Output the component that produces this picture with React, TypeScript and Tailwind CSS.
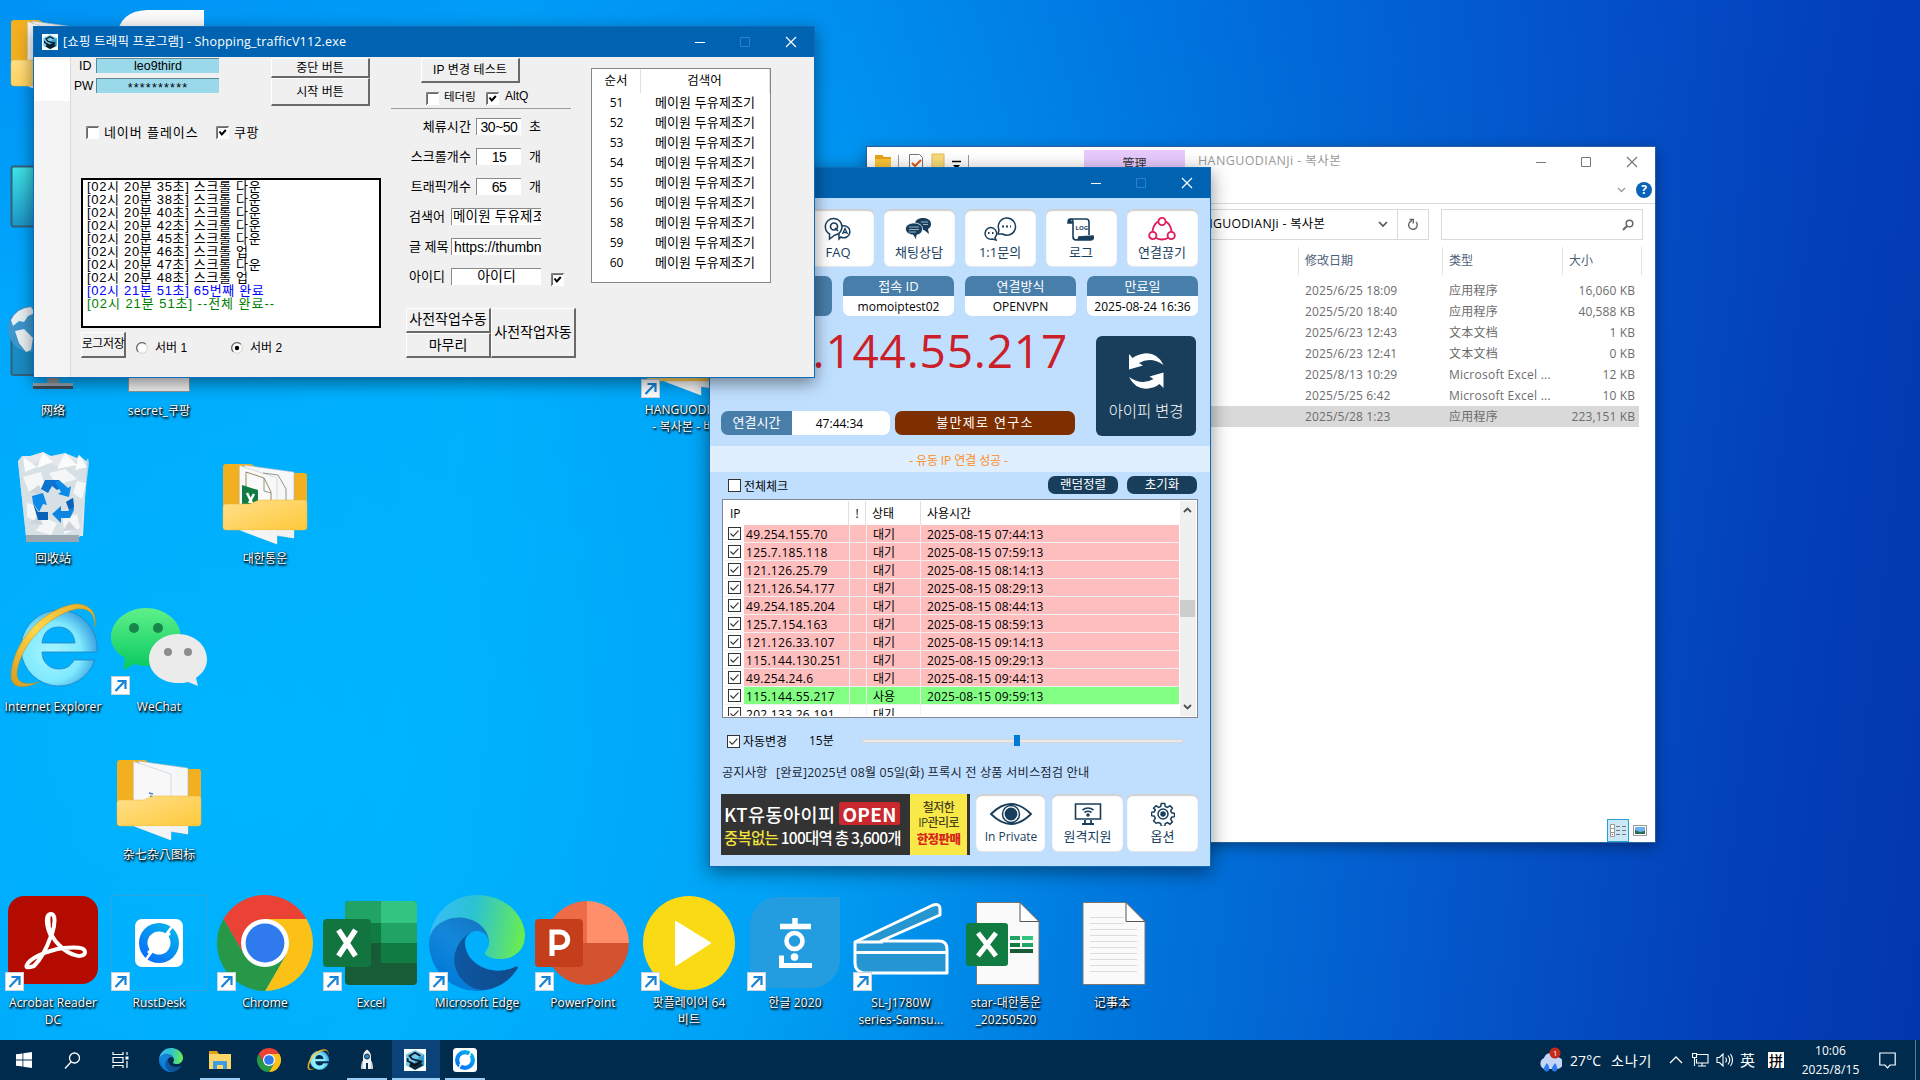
import React from "react";

/* ---------- shared glyphs ---------- */

function Controls({ tone }: { tone: "light" | "gray" }) {
  const stroke = tone === "light" ? "#ffffff" : "#777777";
  const dim = tone === "light" ? "#2f80c9" : "#777777";
  return (
    <div className="flex h-full items-center">
      <svg width="46" height="30" viewBox="0 0 46 30" fill="none">
        <path d="M19 15.5h10" stroke={stroke} />
      </svg>
      <svg width="46" height="30" viewBox="0 0 46 30" fill="none">
        <path d="M18.5 10.5h9v9h-9z" stroke={dim} />
      </svg>
      <svg width="46" height="30" viewBox="0 0 46 30" fill="none">
        <path d="M18 10l10 10M28 10l-10 10" stroke={stroke} strokeWidth="1.2" />
      </svg>
    </div>
  );
}

function Shortcut() {
  return (
    <svg className="absolute bottom-0 left-0" width="19" height="19" viewBox="0 0 19 19">
      <rect x="0.5" y="0.5" width="18" height="18" fill="#fff" stroke="#c9d3de" />
      <path d="M4.5 15L13 6M6.5 5h8v8" fill="none" stroke="#1583d8" strokeWidth="2.2" />
    </svg>
  );
}

function Chrome({ size }: { size: number }) {
  return (
    <svg width={size} height={size} viewBox="0 0 96 96">
      <path d="M6.43 24A48 48 0 0 1 89.57 24H48L27.2 60z" fill="#ea4335" />
      <path d="M89.57 24A48 48 0 0 1 48 96L68.8 60 48 24z" fill="#fbc116" />
      <path d="M48 96A48 48 0 0 1 6.43 24L27.2 60H68.8z" fill="#279847" />
      <circle cx="48" cy="48" r="24" fill="#fff" />
      <circle cx="48" cy="48" r="19.4" fill="#2f7bed" />
    </svg>
  );
}

function Edge({ size, id }: { size: number; id: string }) {
  return (
    <svg width={size} height={size} viewBox="0 0 256 256">
      <defs>
        <linearGradient id={id + "a"} x1="60" y1="180" x2="240" y2="180" gradientUnits="userSpaceOnUse">
          <stop offset="0" stopColor="#0c59a4" />
          <stop offset="1" stopColor="#114a8b" />
        </linearGradient>
        <linearGradient id={id + "b"} x1="150" y1="90" x2="40" y2="240" gradientUnits="userSpaceOnUse">
          <stop offset="0" stopColor="#1478c4" />
          <stop offset="0.4" stopColor="#1387da" />
          <stop offset="1" stopColor="#0078d7" />
        </linearGradient>
        <linearGradient id={id + "c"} x1="10" y1="70" x2="250" y2="110" gradientUnits="userSpaceOnUse">
          <stop offset="0" stopColor="#38bdf8" />
          <stop offset="0.45" stopColor="#2bc3d2" />
          <stop offset="0.75" stopColor="#4bd792" />
          <stop offset="1" stopColor="#66eb55" />
        </linearGradient>
      </defs>
      <g transform="translate(-4.63 -4.92)">
        <path fill={"url(#" + id + "a)"} d="M235.68 195.46a93.73 93.73 0 0 1-10.54 4.71 101.87 101.87 0 0 1-35.9 6.46c-47.32 0-88.54-32.55-88.54-74.32A31.48 31.48 0 0 1 117.13 105c-42.8 1.8-53.8 46.4-53.8 72.53 0 73.88 68.09 81.37 82.76 81.37 7.91 0 19.84-2.3 27-4.56l1.31-.44a128.34 128.34 0 0 0 66.6-52.8 4 4 0 0 0-5.32-5.64z" />
        <path fill={"url(#" + id + "b)"} d="M110.34 246.34A79.2 79.2 0 0 1 87.6 225a80.72 80.72 0 0 1 29.53-120c3.12-1.47 8.45-4.13 15.54-4a32.35 32.35 0 0 1 25.69 13 31.88 31.88 0 0 1 6.36 18.66c0-.21 24.46-79.6-80-79.6-43.9 0-80 41.66-80 78.21a130.15 130.15 0 0 0 12.11 56 128 128 0 0 0 156.38 67.11 75.55 75.55 0 0 1-62.78-8z" />
        <path fill={"url(#" + id + "c)"} d="M156.94 153.78c-.81 1.05-3.3 2.5-3.3 5.66 0 2.61 1.7 5.12 4.72 7.23 14.38 10 41.49 8.68 41.56 8.68a59.56 59.56 0 0 0 30.27-8.35 61.38 61.38 0 0 0 30.43-52.88c.26-22.41-8-37.31-11.34-43.91-21.19-41.45-66.93-65.29-116.67-65.29a128 128 0 0 0-128 126.2c.48-36.54 36.8-66.05 80-66.05 3.5 0 23.46.34 42 10.07 16.34 8.58 24.9 18.94 30.85 29.21 6.18 10.67 7.28 24.15 7.28 29.52s-2.74 13.33-7.8 19.91z" />
      </g>
    </svg>
  );
}

function InternetExplorer({ size, id }: { size: number; id: string }) {
  return (
    <svg width={size} height={size} viewBox="0 0 96 96">
      <defs>
        <radialGradient id={id + "e"} cx="0.4" cy="0.55" r="0.65">
          <stop offset="0" stopColor="#a6f6ff" />
          <stop offset="0.6" stopColor="#7fe9fd" />
          <stop offset="1" stopColor="#2d94dc" />
        </radialGradient>
        <linearGradient id={id + "o"} x1="0" y1="1" x2="1" y2="0">
          <stop offset="0" stopColor="#d99a1d" />
          <stop offset="0.5" stopColor="#ffd84a" />
          <stop offset="1" stopColor="#e6a925" />
        </linearGradient>
      </defs>
      <path fillRule="evenodd" fill={"url(#" + id + "e)"} stroke="#2582c6" strokeWidth="0.8" d="M54 11a38 38 0 0 1 38 42H37c0 10 7 17 17 17 7 0 12-3 15-9h21a38 38 0 1 1-36-50zM37 44h33c-1-10-7-16-16.500-16S38 34 37 44z" />
      <path fill={"url(#" + id + "o)"} stroke="#c98a12" strokeWidth="0.5" d="M90 28C92 12 84 5 70 5 38 10 8 42 6 76c0 14 12 14 28 7-14 4-23 1-22-10C16 46 42 17 71 10c14-2 19 6 19 18z" />
    </svg>
  );
}

function RustDesk({ size, id }: { size: number; id: string }) {
  return (
    <svg width={size} height={size} viewBox="0 0 48 48">
      <defs>
        <linearGradient id={id} x1="0" y1="1" x2="0.8" y2="0">
          <stop offset="0" stopColor="#0a62fb" />
          <stop offset="1" stopColor="#05b6ea" />
        </linearGradient>
      </defs>
      <rect width="48" height="48" rx="7" fill="#fff" />
      <circle cx="24" cy="24" r="20" fill={"url(#" + id + ")"} />
      <circle cx="24" cy="24" r="11.500" fill="#fff" />
      <path d="M30 17l9-12M18 31L9 43" stroke="#fff" strokeWidth="2.600" />
      <path d="M31 20l5-5-3-3-5 5zM17 28l-5 5 3 3 5-5z" fill="#fff" />
    </svg>
  );
}

function HexLogo({ size }: { size: number }) {
  return (
    <svg width={size} height={size} viewBox="0 0 24 24">
      <rect width="24" height="24" fill="#fff" />
      <path d="M12 1l10 5v12l-10 5L2 18V6z" fill="#74c9ec" />
      <path d="M12 12l10-6v12l-10 5z" fill="#2d9fd0" />
      <path d="M18 7.500L12 4 6 7.500 9 11l9 2.500v2L12 19l-5.500-3M4 10v3l8 4 8-4M6 18l6 3.500L20 17" fill="none" stroke="#0b1820" strokeWidth="1.900" />
    </svg>
  );
}

/* ---------- desktop ---------- */

function Folder({ excel, id }: { excel?: boolean; id: string }) {
  return (
    <svg width="96" height="96" viewBox="0 0 96 96">
      <defs>
        <linearGradient id={id} x1="0" y1="0" x2="1" y2="1">
          <stop offset="0" stopColor="#ffe08c" />
          <stop offset="1" stopColor="#fec83a" />
        </linearGradient>
      </defs>
      <path d="M6 16a3 3 0 0 1 3-3h24c4 0 7 6 10 9h44a3 3 0 0 1 3 3v50H6z" fill="#f2b021" />
      <path d="M27 14l50 7v66l-22-3z" fill="#f6f7f8" stroke="#9fb6c4" strokeWidth="0.6" />
      <path d="M22.500 14.500L60 27v66L22.500 78z" fill="#f8f8f8" stroke="#c2c8cc" strokeWidth="0.6" />
      {excel ? (
        <g>
          <path d="M29 21l18 6 7 14v45l-25-9z" fill="#fafafa" stroke="#8e7c50" strokeWidth="0.9" />
          <path d="M47 27v13l7 2M46 22l15 2 8 14v44H60" fill="none" stroke="#8a8a80" strokeWidth="0.9" />
          <path d="M25 34l16 5v20H25z" fill="#107c41" />
          <path d="M30 42l6 12M37 43l-5 9" stroke="#fff" strokeWidth="2.500" />
        </g>
      ) : (
        <path d="M38 46l4 1M39 49l3 1" stroke="#4a7fc0" strokeWidth="1.500" />
      )}
      <path d="M6 56a3 3 0 0 1 3-3h24l9-4h45a3 3 0 0 1 3 3v24a3 3 0 0 1-3 3H9a3 3 0 0 1-3-3z" fill={"url(#" + id + ")"} stroke="#edb63a" strokeWidth="0.5" />
      <path d="M22.500 79.300l37.500 14V79.300z" fill="#f4f4f4" />
      <path d="M60 79.300h17v8l-17-3z" fill="#eff1f3" />
    </svg>
  );
}

function RecycleBin() {
  return (
    <svg width="96" height="96" viewBox="0 0 96 96">
      <path d="M17 5l8 0 13-4 8 4 14-3 12 5 2-3 8 7-4 74H21L13 10z" fill="#e4e8eb" />
      <path d="M13 11l5-6 6 10 16-8 12 8 16-8 10 8 5-8 1 5-9 74H21z" fill="#d3dde4" opacity="0.8" />
      <path d="M18 6l14 10-12 5zM38 1l10 10-16 6zM60 2l12 12-20 4zM74 4l8 12-12 3z" fill="#fafbfb" />
      <path d="M18 26l18-5 4 14-16 6zM44 22l16-4 12 10-20 6zM72 30l9 2-4 16-9-6zM22 52l12 4-4 14-8-4zM38 66l14 6-6 12-14-4zM58 68l14-5 3 14-16 6zM30 80l8-8 10 9z" fill="#f5f6f7" />
      <path d="M24 41l10-7 4 10zM54 35l12 2-5 6zM24 72l10-6 4 8zM58 80l6-10 8 9z" fill="#cdd5da" />
      <path d="M21 84h53v7H21z" fill="#9ba8b1" />
      <path d="M40 29h14l4 7-6 3-5-4-4 7-7-4z" fill="#0a73cf" />
      <path d="M54 29l9 8 3-2-2 11-11-3 3-2-6-10z" fill="#0c8be8" />
      <path d="M27 45l11-3 4 12-4-1-4 8-6-9z" fill="#0c8be8" />
      <path d="M28 52l5 9h10v8H33z" fill="#0a62b8" />
      <path d="M61 51l7-4 1 12-4 8-9 0v5l-9-9 9-8v5h7l4-4z" fill="#0d86e2" />
      <path d="M61 51l7-4 1 9-5 3z" fill="#0a62b8" />
    </svg>
  );
}

function WeChat() {
  return (
    <svg width="96" height="96" viewBox="0 0 96 96">
      <defs>
        <linearGradient id="wx" x1="0" y1="0" x2="0" y2="1">
          <stop offset="0" stopColor="#5ff08a" />
          <stop offset="1" stopColor="#07c95f" />
        </linearGradient>
      </defs>
      <path d="M35 9c19 0 35 13 35 29S54 67 35 67c-4 0-8-1-11-2l-12 6 2-12C5 54 0 47 0 38 0 22 16 9 35 9z" fill="url(#wx)" />
      <circle cx="23" cy="29" r="5" fill="#17864a" />
      <circle cx="47" cy="29" r="5" fill="#17864a" />
      <path d="M67 35c16 0 29 11 29 25 0 8-4 14-11 19l2 8-10-4c-3 1-6 1-10 1-16 0-29-10-29-24s13-25 29-25z" fill="#ebebeb" />
      <circle cx="57" cy="53" r="4" fill="#8d8d8d" />
      <circle cx="77" cy="53" r="4" fill="#8d8d8d" />
    </svg>
  );
}

function Acrobat() {
  return (
    <svg width="96" height="96" viewBox="0 0 96 96">
      <rect x="3" y="1" width="90" height="88" rx="16" fill="#b30b00" />
      <path d="M46 19c-6 0-5 12 0 22-5 14-11 24-17 30-9 3-8 0-7-1 2-6 18-14 36-17 12-1 22-1 22 4 0 6-13 6-26-7-5-5-9-12-10-18-1-8-1-13 2-13 5 0 4 11 1 20" fill="none" stroke="#fff" strokeWidth="4" strokeLinejoin="round" />
    </svg>
  );
}

function ExcelApp() {
  return (
    <svg width="96" height="96" viewBox="0 0 96 96">
      <rect x="22" y="6" width="72" height="84" rx="4" fill="#185c37" />
      <path d="M22 10a4 4 0 0 1 4-4h32v22H22z" fill="#21a366" />
      <path d="M58 6h32a4 4 0 0 1 4 4v18H58z" fill="#33c481" />
      <path d="M22 28h36v20H22z" fill="#107c41" />
      <path d="M58 28h36v20H58z" fill="#21a366" />
      <path d="M58 48h36v20H58z" fill="#107c41" />
      <rect x="0" y="24" width="48" height="48" rx="4" fill="#12753f" />
      <path d="M15.500 35l17 26M32.500 35l-17 26" stroke="#fff" strokeWidth="5.500" />
    </svg>
  );
}

function PowerPoint() {
  return (
    <svg width="96" height="96" viewBox="0 0 96 96">
      <path d="M52 6a42 42 0 0 0-42 42h42z" fill="#ed6c47" />
      <path d="M52 6a42 42 0 0 1 42 42H52z" fill="#ff8f6b" />
      <path d="M10 48a42 42 0 0 0 84 0z" fill="#d35230" />
      <rect x="0" y="24" width="48" height="48" rx="4" fill="#c43e1c" />
      <path d="M17 61V37h8a7 7 0 0 1 0 15.500h-8" fill="none" stroke="#fff" strokeWidth="5" />
    </svg>
  );
}

function PotPlayer() {
  return (
    <svg width="96" height="96" viewBox="0 0 96 96">
      <ellipse cx="48" cy="48" rx="46" ry="47" fill="#fad915" />
      <path d="M35 27l34 21-34 22z" fill="#fff" stroke="#fff" strokeWidth="2" strokeLinejoin="round" />
    </svg>
  );
}

function Hangul() {
  return (
    <svg width="96" height="96" viewBox="0 0 96 96">
      <path d="M3 30A28 28 0 0 1 31 2h62v62a29 29 0 0 1-29 29H3z" fill="#249de0" />
      <path d="M48 23v8M33 31.500h31" stroke="#fff" strokeWidth="5.500" />
      <circle cx="47.500" cy="46" r="8" fill="none" stroke="#fff" strokeWidth="4.600" />
      <circle cx="47.500" cy="62" r="3.800" fill="#fff" />
      <path d="M34.500 60.500v10H65" fill="none" stroke="#fff" strokeWidth="5" />
    </svg>
  );
}

function Scanner() {
  return (
    <svg width="96" height="96" viewBox="0 0 96 96" fill="#2596d1" stroke="#fff" strokeWidth="3" strokeLinejoin="round">
      <path d="M2 47L80 10q7-2 7 4v6L28 46h58q8 0 8 8v24H10q-8-2-8-10z" />
      <path d="M2 57.500h92M2 47h28" fill="none" />
    </svg>
  );
}

function ExcelDoc() {
  return (
    <svg width="96" height="96" viewBox="0 0 96 96">
      <path d="M18.500 7.500H62l19 19v63H18.500z" fill="#fafafa" stroke="#777" />
      <path d="M62 7.500v19h19z" fill="#fff" stroke="#555" />
      <rect x="8" y="28" width="42" height="43" rx="3" fill="#107c41" />
      <path d="M20 38l18 23M38 38L20 61" stroke="#fff" strokeWidth="5" />
      <path d="M52 41h10v4H52z" fill="#21a366" />
      <path d="M64 41h11v4H64z" fill="#33c481" />
      <path d="M52 48h10v4H52z" fill="#107c41" />
      <path d="M64 48h11v4H64z" fill="#21a366" />
      <path d="M52 54h23v4H52z" fill="#185c37" />
    </svg>
  );
}

function NoteDoc() {
  return (
    <svg width="96" height="96" viewBox="0 0 96 96">
      <path d="M19 7.500H62l19 19v63H19z" fill="#fafafa" stroke="#777" />
      <path d="M62 7.500v19h19z" fill="#fff" stroke="#555" />
      <path d="M26 22.500h34M26 28.500h34M26 34.500h47M26 40.500h47M26 46.500h47M26 52.500h47M26 58.500h47M26 64.500h47M26 70.500h47M26 76.500h47" stroke="#dcdcdc" />
    </svg>
  );
}

function RustDeskTile() {
  return (
    <div className="flex size-24 items-center justify-center border border-[#2fa4dd]">
      <RustDesk size={48} id="rust1" />
    </div>
  );
}

function Computer() {
  return (
    <svg width="96" height="96" viewBox="0 0 96 96">
      <defs>
        <linearGradient id="mon" x1="0" y1="0" x2="0.5" y2="1">
          <stop offset="0" stopColor="#3fe6e6" />
          <stop offset="1" stopColor="#1583c0" />
        </linearGradient>
      </defs>
      <rect x="6.500" y="11.500" width="83" height="60" rx="2" fill="url(#mon)" stroke="#33607a" strokeWidth="2" />
    </svg>
  );
}

function Network() {
  return (
    <svg width="96" height="96" viewBox="0 0 96 96">
      <rect x="6.500" y="14" width="83" height="58" rx="2" fill="#1a8cc4" stroke="#33607a" strokeWidth="2" />
      <path d="M42 72h12v9H42z" fill="#8b9198" />
      <path d="M28 80h40v5H28z" fill="#98a2ac" />
      <path d="M28 83h40v3H28z" fill="#3f4a55" />
      <circle cx="26" cy="26" r="23" fill="#3d96cc" />
      <path d="M6 17q6-12 20-13l4 6-7 3-4 6-5-1-6 5zM10 28l9-2 9 9-2 12-5 2-7-9z" fill="#e8eff3" />
    </svg>
  );
}

function SecretDoc() {
  return (
    <svg width="96" height="96" viewBox="0 0 96 96">
      <path d="M17.500 4.500h61v84h-61z" fill="#f0f0f0" stroke="#8d9499" />
    </svg>
  );
}

function HwpDoc() {
  return (
    <svg width="96" height="96" viewBox="0 0 96 96">
      <path d="M6 30Q8 4 36 3h57v80H6z" fill="#fbfbfb" />
    </svg>
  );
}

type Item = {
  pos: string;
  icon: React.ReactNode;
  lines: string[];
  shortcut?: boolean;
};

const items: Item[] = [
  { pos: "left-0 top-[7px]", icon: <Folder id="f1" />, lines: [] },
  { pos: "left-[106px] top-[7px]", icon: <HwpDoc />, lines: [] },
  { pos: "left-0 top-[155px]", icon: <Computer />, lines: [] },
  { pos: "left-0 top-[303px]", icon: <Network />, lines: ["网络"] },
  { pos: "left-[106px] top-[303px]", icon: <SecretDoc />, lines: ["secret_쿠팡"] },
  { pos: "left-[636px] top-[302px]", icon: <Folder id="f2" />, lines: ["HANGUODIANJi", "- 복사본 - 바로"], shortcut: true },
  { pos: "left-0 top-[451px]", icon: <RecycleBin />, lines: ["回收站"] },
  { pos: "left-[212px] top-[451px]", icon: <Folder id="f3" excel />, lines: ["대한통운"] },
  { pos: "left-0 top-[599px]", icon: <InternetExplorer size={96} id="ie1" />, lines: ["Internet Explorer"] },
  { pos: "left-[106px] top-[599px]", icon: <WeChat />, lines: ["WeChat"], shortcut: true },
  { pos: "left-[106px] top-[747px]", icon: <Folder id="f4" />, lines: ["杂七杂八图标"] },
  { pos: "left-0 top-[895px]", icon: <Acrobat />, lines: ["Acrobat Reader", "DC"], shortcut: true },
  { pos: "left-[106px] top-[895px]", icon: <RustDeskTile />, lines: ["RustDesk"], shortcut: true },
  { pos: "left-[212px] top-[895px]", icon: <Chrome size={96} />, lines: ["Chrome"], shortcut: true },
  { pos: "left-[318px] top-[895px]", icon: <ExcelApp />, lines: ["Excel"], shortcut: true },
  { pos: "left-[424px] top-[895px]", icon: <Edge size={96} id="ed1" />, lines: ["Microsoft Edge"], shortcut: true },
  { pos: "left-[530px] top-[895px]", icon: <PowerPoint />, lines: ["PowerPoint"], shortcut: true },
  { pos: "left-[636px] top-[895px]", icon: <PotPlayer />, lines: ["팟플레이어 64", "비트"], shortcut: true },
  { pos: "left-[742px] top-[895px]", icon: <Hangul />, lines: ["한글 2020"], shortcut: true },
  { pos: "left-[848px] top-[895px]", icon: <Scanner />, lines: ["SL-J1780W", "series-Samsu..."], shortcut: true },
  { pos: "left-[953px] top-[895px]", icon: <ExcelDoc />, lines: ["star-대한통운", "_20250520"] },
  { pos: "left-[1059px] top-[895px]", icon: <NoteDoc />, lines: ["记事本"] },
];

function DesktopItem({ item }: { item: Item }) {
  return (
    <div className={"absolute flex w-[106px] flex-col items-center " + item.pos}>
      <div className="relative size-24">
        {item.icon}
        {item.shortcut && <Shortcut />}
      </div>
      <div className="mt-[3px] text-center text-[12px] leading-[17px] tracking-[0.1px] whitespace-nowrap text-white [text-shadow:1px_1px_2px_#000,1px_2px_2px_#000c,0_0_2px_#0008]">
        {item.lines.map((l) => (
          <div key={l}>{l}</div>
        ))}
      </div>
    </div>
  );
}

/* ---------- traffic program window ---------- */

const BTN =
  "flex items-center justify-center whitespace-nowrap border-t border-l border-t-white border-l-white border-r-2 border-b-2 border-r-[#696969] border-b-[#696969] bg-[#f0f0f0]";
const FIELD = "flex items-center overflow-hidden whitespace-nowrap border-t border-l border-[#8a8a8a] bg-white";

function OldCheck({ on }: { on?: boolean }) {
  return (
    <svg className="shrink-0" width="13" height="13" viewBox="0 0 13 13">
      <rect width="13" height="13" fill="#fff" />
      <path d="M0.500 13V0.500H13" fill="none" stroke="#808080" />
      <path d="M1.500 12V1.500H12" fill="none" stroke="#696969" />
      {on && <path d="M3.500 5.500l2.300 3 4-4.500" fill="none" stroke="#000" strokeWidth="2" />}
    </svg>
  );
}

function Radio({ on }: { on?: boolean }) {
  return (
    <svg width="12" height="12" viewBox="0 0 12 12">
      <circle cx="6" cy="6" r="5.300" fill="#fff" stroke="#d0d0d0" />
      <path d="M2.200 9.800A5.300 5.300 0 0 1 9.800 2.200" fill="none" stroke="#6e6e6e" strokeWidth="1.300" />
      {on && <circle cx="6" cy="6" r="2.200" fill="#000" />}
    </svg>
  );
}

const logs = [
  "[02시 20분 35초] 스크롤 다운",
  "[02시 20분 38초] 스크롤 다운",
  "[02시 20분 40초] 스크롤 다운",
  "[02시 20분 42초] 스크롤 다운",
  "[02시 20분 45초] 스크롤 다운",
  "[02시 20분 46초] 스크롤 업",
  "[02시 20분 47초] 스크롤 다운",
  "[02시 20분 48초] 스크롤 업",
];

const numberRows = [
  ["체류시간", "30~50", "초"],
  ["스크롤개수", "15", "개"],
  ["트래픽개수", "65", "개"],
];

function TrafficWindow() {
  return (
    <div className="absolute left-[33px] top-[26px] flex h-[352px] w-[782px] flex-col border border-[#0f6cb8] bg-[#f0f0f0] shadow-[0_5px_16px_rgba(0,0,0,0.45)] [font-family:'Liberation_Sans','Noto_Sans_CJK_KR',sans-serif]">
      <div className="flex h-[30px] shrink-0 items-center bg-[#0063b1] pl-2 text-white">
        <HexLogo size={16} />
        <div className="ml-[5px] flex-1 text-[12.5px] tracking-[0.18px] [font-family:'Open_Sans','Noto_Sans_CJK_KR',sans-serif]">
          [쇼핑 트래픽 프로그램] - Shopping_trafficV112.exe
        </div>
        <Controls tone="light" />
      </div>
      <div className="flex min-h-0 flex-1 text-[12.500px] text-black">
        <div className="w-[37px] border-r border-[#d9d9d9] bg-[#f4f4f4] pt-[3px]">
          <div className="h-[41px] bg-white" />
        </div>
        {/* account, options and log */}
        <div className="flex w-[320px] flex-col pt-px">
          <div className="flex h-12">
            <div className="flex flex-col gap-[5px]">
              <div className="flex h-[15px] items-center">
                <span className="w-[25px] pt-px pl-2">ID</span>
                <div className="flex h-[15px] w-[123px] items-center justify-center border-t border-l border-[#5e8a98] bg-[#99d9ea]">leo9third</div>
              </div>
              <div className="flex h-[15px] items-center">
                <span className="w-[25px] pt-px pl-[3px] text-[12px]">PW</span>
                <div className="flex h-[15px] w-[123px] items-center justify-center border-t border-l border-[#5e8a98] bg-[#99d9ea] pt-1 tracking-[1.2px]">**********</div>
              </div>
            </div>
            <div className="ml-[52px] flex w-[99px] flex-col">
              <div className={BTN + " h-5 text-[12px]"}>중단 버튼</div>
              <div className={BTN + " h-7 text-[12px]"}>시작 버튼</div>
            </div>
          </div>
          <div className="mt-5 flex h-[13px] items-center pl-[15px]">
            <OldCheck />
            <span className="ml-[5px] w-[112px] text-[13px] tracking-[0.9px]">네이버 플레이스</span>
            <OldCheck on />
            <span className="ml-[5px] text-[13px] tracking-[0.5px]">쿠팡</span>
          </div>
          <div className="mt-[39px] ml-[10px] flex h-[150px] w-[300px] flex-col border-2 border-black bg-white pl-[4px] text-[13px] leading-[13px] tracking-[0.68px] whitespace-pre">
            {logs.map((l) => (
              <div key={l} className="h-[13px]">{l}</div>
            ))}
            <div className="h-[13px] text-[#0000ff]">[02시 21분 51초] 65번째 완료</div>
            <div className="h-[13px] tracking-[0.95px] text-[#008000]">[02시 21분 51초] --전체 완료--</div>
          </div>
          <div className="mt-1 ml-[10px] flex h-[26px] items-center">
            <div className={BTN + " h-full w-[45px] pb-px text-[12px] tracking-[-0.4px]"}>로그저장</div>
            <div className="ml-[10px] flex w-[95px] items-center gap-[7px] pt-[6px] text-[12px]"><Radio />서버 1</div>
            <div className="flex items-center gap-[7px] pt-[6px] text-[12px]"><Radio on />서버 2</div>
          </div>
        </div>
        {/* run settings */}
        <div className="flex w-[200px] flex-col pt-px">
          <div className={BTN + " ml-[30px] h-[25px] w-[99px] text-[12px] tracking-[0.1px]"}>IP 변경 테스트</div>
          <div className="mt-2 ml-[35px] flex h-[14px] items-end text-[11.500px]">
            <OldCheck />
            <span className="mb-[-1px] ml-[5px] w-[42px]">테더링</span>
            <OldCheck on />
            <span className="ml-[6px] text-[12px]">AltQ</span>
          </div>
          <div className="mt-[3px] h-px w-[180px] bg-[#9a9a9a]" />
          <div className="mt-[9px] flex flex-col gap-[13px] text-[13px]">
            {numberRows.map((r) => (
              <div key={r[0]} className="flex h-[17px] items-center">
                <span className="w-[85px] pr-[5px] text-right tracking-[0.1px] whitespace-nowrap">{r[0]}</span>
                <div className={FIELD + " h-[17px] w-[45px] justify-center text-[14px] tracking-[-0.5px]"}>{r[1]}</div>
                <span className="ml-2">{r[2]}</span>
              </div>
            ))}
            <div className="flex h-[17px] items-center">
              <span className="w-[60px] pl-[18px] whitespace-nowrap">검색어</span>
              <div className={FIELD + " h-[17px] w-[90px] pl-px text-[13.500px] tracking-[0.2px]"}>메이원 두유제조기</div>
            </div>
            <div className="flex h-[17px] items-center">
              <span className="w-[60px] pl-[18px] whitespace-nowrap">글 제목</span>
              <div className={FIELD + " h-[17px] w-[90px] pl-[2px] text-[14px] tracking-[-0.1px]"}>https://thumbnail</div>
            </div>
            <div className="flex h-[17px] items-center">
              <span className="w-[60px] pl-[18px] whitespace-nowrap">아이디</span>
              <div className={FIELD + " h-[17px] w-[90px] justify-center pb-px text-[14px]"}>아이디</div>
              <div className="mt-[5px] ml-[10px]"><OldCheck on /></div>
            </div>
          </div>
          <div className="mt-[23px] ml-[15px] flex h-[50px] text-[14px]">
            <div className="flex w-[85px] flex-col">
              <div className={BTN + " h-[25px] pb-px"}>사전작업수동</div>
              <div className={BTN + " h-[25px]"}>마무리</div>
            </div>
            <div className={BTN + " w-[85px]"}>사전작업자동</div>
          </div>
        </div>
        {/* keyword list */}
        <div className="mt-[11px] flex h-[215px] w-[180px] flex-col border border-[#828790] bg-white text-[13px]">
          <div className="flex h-6 shrink-0 items-center text-[12.500px]">
            <div className="flex h-full w-[49px] items-center justify-center border-r border-[#e0e0e0]">순서</div>
            <div className="flex h-full flex-1 items-center justify-center border-r border-[#e0e0e0] pr-px">검색어</div>
          </div>
          {[51, 52, 53, 54, 55, 56, 58, 59, 60].map((n) => (
            <div key={n} className="flex h-5 items-center">
              <span className="w-[49px] text-center text-[12px] [font-family:'Open_Sans',sans-serif]">{n}</span>
              <span className="flex-1 pr-px text-center tracking-[0.1px]">메이원 두유제조기</span>
            </div>
          ))}
        </div>
      </div>
    </div>
  );
}

/* ---------- VPN client window ---------- */

const INK = "#183e5b";

const toolIcons: { label: string; icon: React.ReactNode }[] = [
  {
    label: "FAQ",
    icon: (
      <svg width="28" height="24" viewBox="0 0 28 24" fill="none" stroke={INK} strokeWidth="1.500">
        <path d="M5.500 22v-5A8.300 8.300 0 1 1 11 18z" />
        <circle cx="10" cy="9.500" r="3.500" strokeWidth="1.700" />
        <path d="M11 11l3 3" strokeWidth="1.700" />
        <path d="M18 9a6 6 0 1 1-1 11l-2 2v-6" />
        <path d="M18.500 17l2.500-5.500 2.500 5.500M19.500 15.500h3" strokeWidth="1.300" />
      </svg>
    ),
  },
  {
    label: "채팅상담",
    icon: (
      <svg width="28" height="24" viewBox="0 0 28 24">
        <path d="M18 1c5 0 8 2.500 8 6 0 2-1 4-3 5l1 5-5-4h-4c-3-1-5-3-5-6 0-3.500 3-6 8-6z" fill={INK} />
        <path d="M9 6c5 0 8.500 2.500 8.500 6S15 17.500 12 18l-1 5-3-5C4 17.500.500 15.500.500 12S4 6 9 6z" fill={INK} stroke="#fff" strokeWidth="0.8" />
        <path d="M4 10h10M4 12.500h10M4 15h7M16 5h7M18 7.500h5" stroke="#a8c0d0" strokeWidth="0.9" />
      </svg>
    ),
  },
  {
    label: "1:1문의",
    icon: (
      <svg width="34" height="24" viewBox="0 0 34 24" fill="none" stroke={INK} strokeWidth="1.500">
        <path d="M15 17l1-4A8.600 8.600 0 1 1 19.500 17z" />
        <path d="M12 20.500l1 2.500-3.500-1A5.800 5.800 0 1 1 12 20.500z" />
        <path d="M19 9.500h2M23 9.500h2M27 9.500h1M5 16h1.500M9 16h1.500" strokeWidth="1.800" />
      </svg>
    ),
  },
  {
    label: "로그",
    icon: (
      <svg width="28" height="24" viewBox="0 0 28 24" fill="none" stroke={INK} strokeWidth="1.600">
        <path d="M6 20V5Q6 2 3 2h16q3 0 3 3v13" />
        <path d="M3 2Q1 2 1 6h5" fill={INK} />
        <path d="M6 20q0 3 3 3h15q3 0 2-4l-14 1q0 3-3 3" fill={INK} />
        <text x="8.500" y="13" fontSize="6" fontWeight="700" fill={INK} stroke="none" fontFamily="Open Sans">LOG</text>
      </svg>
    ),
  },
  {
    label: "연결끊기",
    icon: (
      <svg width="28" height="24" viewBox="0 0 28 24" fill="none" stroke="#e01f5a" strokeWidth="1.900">
        <circle cx="14" cy="4.500" r="3.600" />
        <circle cx="4.800" cy="18.500" r="3.600" />
        <circle cx="23.200" cy="18.500" r="3.600" />
        <path d="M10 4.500Q5 8 4.500 14.500M18 4.500q5 3.500 5.500 10M8 21q6 3 12 0" />
      </svg>
    ),
  },
];

const TILE =
  "flex flex-col items-center rounded-[6px] bg-white text-[13px] text-[#183e5b] shadow-[inset_0_2px_1px_rgba(120,120,120,0.35),inset_0_-1px_1px_rgba(150,150,150,0.25)]";

const ipRows = [
  ["49.254.155.70", "대기", "2025-08-15 07:44:13"],
  ["125.7.185.118", "대기", "2025-08-15 07:59:13"],
  ["121.126.25.79", "대기", "2025-08-15 08:14:13"],
  ["121.126.54.177", "대기", "2025-08-15 08:29:13"],
  ["49.254.185.204", "대기", "2025-08-15 08:44:13"],
  ["125.7.154.163", "대기", "2025-08-15 08:59:13"],
  ["121.126.33.107", "대기", "2025-08-15 09:14:13"],
  ["115.144.130.251", "대기", "2025-08-15 09:29:13"],
  ["49.254.24.6", "대기", "2025-08-15 09:44:13"],
  ["115.144.55.217", "사용", "2025-08-15 09:59:13"],
  ["202.133.26.191", "대기", ""],
];

function Check({ on }: { on?: boolean }) {
  return (
    <svg className="shrink-0" width="13" height="13" viewBox="0 0 13 13" fill="none">
      <rect x="0.500" y="0.500" width="12" height="12" fill="#fff" stroke="#333" />
      {on && <path d="M2.500 6.500l2.700 2.700 5.300-5.500" stroke="#333" strokeWidth="1.100" />}
    </svg>
  );
}

function rowColor(i: number) {
  if (i < 9) return "bg-[#ffbebe]";
  return i === 9 ? "bg-[#82ff82]" : "bg-white";
}

function InfoPill({ head, value }: { head: string; value: string }) {
  return (
    <div className="h-10 w-[111px] overflow-hidden rounded-[7px] bg-white text-center">
      <div className="h-5 bg-[#477eaa] text-[13px] leading-[20px] text-white">{head}</div>
      <div className="text-[12px] leading-[21px] whitespace-nowrap text-black">{value}</div>
    </div>
  );
}

function VpnWindow() {
  return (
    <div className="absolute left-[709px] top-[167px] flex h-[700px] w-[502px] flex-col border border-[#0f6cb8] bg-[#c0dfff] shadow-[0_5px_18px_rgba(0,0,0,0.45)] [font-family:'Open_Sans','Noto_Sans_CJK_KR',sans-serif]">
      <div className="flex h-[30px] shrink-0 items-center justify-end bg-[#0063b1]">
        <Controls tone="light" />
      </div>
      <div className="mt-[11px] ml-3 flex gap-[10px]">
        <div className={TILE + " h-[58px] w-[71px]"} />
        {toolIcons.map((t) => (
          <div key={t.label} className={TILE + " h-[58px] w-[71px] pt-[8px] pr-px"}>
            {t.icon}
            <span className="mt-[3px] leading-[17px] whitespace-nowrap">{t.label}</span>
          </div>
        ))}
      </div>
      <div className="mt-[9px] ml-[11px] flex gap-[11px]">
        <div className="h-10 w-[111px] rounded-[7px] bg-[#477eaa]" />
        <InfoPill head="접속 ID" value="momoiptest02" />
        <InfoPill head="연결방식" value="OPENVPN" />
        <InfoPill head="만료일" value="2025-08-24 16:36" />
      </div>
      <div className="mt-5 ml-[11px] flex h-[99px]">
        <div className="flex w-[354px] flex-col">
          <div className="-mt-[13px] flex h-[54px] items-center justify-end pr-[7px] text-[46px] leading-none tracking-[0.8px] whitespace-nowrap text-[#cc2029]">
            115.144.55.217
          </div>
          <div className="mt-[34px] flex h-6 text-[13px]">
            <div className="flex w-[71px] items-center justify-center rounded-l-[7px] bg-[#477eaa] text-white">연결시간</div>
            <div className="flex w-[98px] items-center justify-center rounded-r-[7px] bg-white pt-px pr-[3px] text-[12px] text-black">47:44:34</div>
            <div className="ml-[5px] flex w-[180px] items-center justify-center rounded-[7px] bg-[#7d2f00] tracking-[1.300px] text-white">불만제로 연구소</div>
          </div>
        </div>
        <div className="ml-[21px] flex h-[100px] w-[100px] flex-col items-center rounded-[6px] bg-[#183e5b] text-white">
          <svg className="mt-[17px]" width="36" height="36" viewBox="0 0 36 36" fill="#fff">
            <path d="M1 1v15.500l14-4-4-2.500Q23 3 35.500 12 29-1 16 .5 9 1.500 4.500 5z" />
            <path d="M35.500 35V19.500l-14 4 4 2.500Q14 33 1 24q6.500 13 19.500 11.500 7-1 11-4.500z" />
          </svg>
          <span className="mt-[11px] text-[15.500px] leading-[22px] font-light tracking-[-0.1px] whitespace-nowrap">아이피 변경</span>
        </div>
      </div>
      <div className="mt-[11px] flex h-[26px] shrink-0 items-center justify-center bg-[#e0effd] pt-[4px] pr-[3px] text-[12px] tracking-[-0.1px] text-[#ff8c1a]">- 유동 IP 연결 성공 -</div>
      <div className="mt-1 ml-[18px] flex h-[18px] items-center text-[12px]">
        <Check />
        <span className="ml-[3px] flex-1 pt-[4px]">전체체크</span>
        <div className="flex h-[18px] w-[70px] items-center justify-center rounded-[7px] bg-[#183e5b] text-[12.500px] text-white">랜덤정렬</div>
        <div className="mr-[13px] ml-[9px] flex h-[18px] w-[70px] items-center justify-center rounded-[7px] bg-[#183e5b] text-[12.500px] text-white">초기화</div>
      </div>
      <div className="mt-[5px] ml-3 flex h-[219px] w-[476px] shrink-0 border border-[#828790] bg-white p-px text-[12px] text-black">
        <div className="flex h-full flex-1 flex-col overflow-hidden">
          <div className="flex h-6 shrink-0 items-center">
            <div className="flex h-full w-[125px] items-center border-r border-[#e0e0e0] pt-[2px] pl-[6px]">IP</div>
            <div className="flex h-full w-[17px] items-center justify-center border-r border-[#e0e0e0] pt-[2px]">!</div>
            <div className="flex h-full w-[55px] items-center border-r border-[#e0e0e0] pt-[2px] pl-[6px]">상태</div>
            <div className="pt-[2px] pl-[6px]">사용시간</div>
          </div>
          {ipRows.map((r, i) => (
            <div key={r[0]} className="flex h-[18px] shrink-0 border-b border-[#f0f0f0]">
              <div className="w-5 pt-[2px] pl-1"><Check on /></div>
              <div className={"flex flex-1 leading-[19px] " + rowColor(i)}>
                <span className="w-[106px] border-r border-[#f0f0f0] pl-[2px] tracking-[0.28px]">{r[0]}</span>
                <span className="w-[17px] border-r border-[#f0f0f0]" />
                <span className="w-[54px] border-r border-[#f0f0f0] pl-[6px]">{r[1]}</span>
                <span className="pl-[6px] tracking-[0.18px]">{r[2]}</span>
              </div>
            </div>
          ))}
        </div>
        <div className="ml-px flex w-4 flex-col items-center justify-between bg-[#f0f0f0] py-[6px] pr-[2px]">
          <svg width="9" height="6" viewBox="0 0 9 6"><path d="M1 5l3.500-3.500L8 5" fill="none" stroke="#505050" strokeWidth="1.800" /></svg>
          <div className="h-[17px] w-[15px] bg-[#cdcdcd]" />
          <svg width="9" height="6" viewBox="0 0 9 6"><path d="M1 1l3.500 3.500L8 1" fill="none" stroke="#505050" strokeWidth="1.800" /></svg>
        </div>
      </div>
      <div className="mt-[16px] ml-[17px] flex h-[14px] items-center text-[12px]">
        <Check on />
        <span className="ml-[3px] w-[66px] pt-px">자동변경</span>
        <span className="w-[53px]">15분</span>
        <div className="flex h-1 w-[321px] items-center border border-[#d6d6d6] bg-[#e7eaea]">
          <div className="-mt-[2px] ml-[151px] h-[11px] w-[6px] bg-[#0078d7]" />
        </div>
      </div>
      <div className="mt-[15px] ml-[11px] flex h-5 items-center text-[12.300px] text-[#1a2733]">
        <span className="w-[55px] pl-px">공지사항</span>
        <span className="tracking-[0.12px] whitespace-nowrap">[완료]2025년 08월 05일(화) 프록시 전 상품 서비스점검 안내</span>
      </div>
      <div className="mt-[11px] ml-[11px] flex">
        <div className="flex h-[61px] w-[249px] bg-[#333] font-bold">
          <div className="flex w-[189px] flex-col justify-center whitespace-nowrap text-white [font-family:'Noto_Sans_CJK_KR',sans-serif]">
            <div className="flex items-center pl-[3px] text-[18.500px] leading-6 font-medium tracking-[0.45px]">
              KT유동아이피
              <span className="ml-1 rounded-[2px] bg-[#c8282e] px-[3px] text-[19px] leading-[23px] font-bold tracking-[0.3px]">OPEN</span>
            </div>
            <div className="pl-[3px] text-[15.500px] leading-[22px] font-medium tracking-[-0.75px]">
              <span className="text-[#f3e23c]">중복없는</span> 100대역 총 3,600개
            </div>
          </div>
          <div className="flex w-[57px] flex-col items-center justify-center bg-[#f8e948] text-[12px] leading-[15px] font-medium tracking-[-0.6px] whitespace-nowrap text-[#4a4420]">
            <span>철저한</span>
            <span>IP관리로</span>
            <span className="text-[12.500px] leading-[19px] font-black text-[#d8261c]">한정판매</span>
          </div>
        </div>
        <div className={TILE + " ml-[6px] h-[58px] w-[69px] pt-2 pl-px"}>
          <svg width="42" height="24" viewBox="0 0 42 24" fill="none" stroke={INK} strokeWidth="1.800">
            <path d="M1 12Q11 2 21 2t20 10Q31 22 21 22T1 12z" />
            <circle cx="21" cy="12" r="8.500" strokeWidth="1.500" />
            <circle cx="21" cy="12" r="5.500" fill={INK} />
          </svg>
          <span className="mt-[2px] text-[12px] leading-[17px] whitespace-nowrap">In Private</span>
        </div>
        <div className={TILE + " ml-[7px] h-[58px] w-[71px] pt-2"}>
          <svg width="28" height="24" viewBox="0 0 28 24" fill="none" stroke={INK} strokeWidth="1.600">
            <path d="M1.500 2h25v15h-25z" />
            <path d="M11 18v4M17 18v4M8 22h12" strokeWidth="1.800" />
            <path d="M8.500 8q5.500-4 11 0M10.500 10.500q3.500-2.500 7 0" />
            <circle cx="14" cy="13" r="1" fill={INK} />
          </svg>
          <span className="mt-[2px] leading-[17px] whitespace-nowrap">원격지원</span>
        </div>
        <div className={TILE + " ml-[4px] h-[58px] w-[71px] pt-2"}>
          <svg width="24" height="24" viewBox="0 0 24 24" fill="none" stroke={INK} strokeWidth="1.500">
            <path d="M10.300 1.500h3.400l.6 3 2.200.9 2.500-1.700 2.400 2.400-1.700 2.500.9 2.200 2.900.5v3.400l-2.900.5-.9 2.200 1.700 2.500-2.400 2.300-2.500-1.600-2.200.9-.6 2.900h-3.400l-.6-2.900-2.200-.9L5 21.200l-2.400-2.300 1.700-2.500-.9-2.200-2.900-.5v-3.400l2.900-.5.9-2.200L2.600 6.100 5 3.700l2.500 1.700 2.200-.9z" />
            <circle cx="12" cy="12" r="5" />
            <circle cx="12" cy="12" r="2" fill={INK} />
          </svg>
          <span className="mt-[2px] leading-[17px]">옵션</span>
        </div>
      </div>
    </div>
  );
}

/* ---------- file explorer window ---------- */

const files = [
  ["2025/6/25 18:09", "应用程序", "16,060 KB"],
  ["2025/5/20 18:40", "应用程序", "40,588 KB"],
  ["2025/6/23 12:43", "文本文档", "1 KB"],
  ["2025/6/23 12:41", "文本文档", "0 KB"],
  ["2025/8/13 10:29", "Microsoft Excel ...", "12 KB"],
  ["2025/5/25 6:42", "Microsoft Excel ...", "10 KB"],
  ["2025/5/28 1:23", "应用程序", "223,151 KB"],
];

function ExplorerWindow() {
  return (
    <div className="absolute left-[867px] top-[147px] flex h-[695px] w-[788px] flex-col bg-white text-[12px] shadow-[0_0_0_1px_#2a5f9c,0_4px_14px_rgba(0,0,0,0.4)]">
      <div className="flex h-[29px] shrink-0 items-center">
        <svg className="ml-2" width="94" height="20" viewBox="0 0 94 20" fill="none">
          <path d="M0 5V3h7l2 2h7v14H0z" fill="#e8a613" />
          <path d="M0 7h16v12H0z" fill="#fcc537" />
          <path d="M23.500 3v17M93.500 3v17" stroke="#9a9a9a" />
          <path d="M34.500 2.500h10l3 3V20h-13z" fill="#fff" stroke="#777" />
          <path d="M37 11l3 3 6-6" stroke="#e2571f" strokeWidth="2" />
          <path d="M57 2h12v18H57z" fill="#f9dc7a" stroke="#e5bb4c" />
          <path d="M77 9.500h9" stroke="#000" strokeWidth="1.500" />
          <path d="M78 13h7l-3.500 4z" fill="#000" />
        </svg>
        <div className="ml-[115px] flex h-full w-[101px] items-center justify-center self-end bg-[#e8caff] pt-1 text-[#333] [clip-path:inset(3px_0_0_0)]">管理</div>
        <div className="ml-[13px] flex-1 text-[12.500px] tracking-[0.4px] text-[#999]">HANGUODIANJi - 복사본</div>
        <Controls tone="gray" />
      </div>
      <div className="flex h-[28px] shrink-0 items-center justify-end border-b border-[#dadbdc] pr-[3px]">
        <svg width="9" height="6" viewBox="0 0 9 6"><path d="M1 1l3.500 3.500L8 1" fill="none" stroke="#999" strokeWidth="1.300" /></svg>
        <div className="ml-[10px] flex size-4 items-center justify-center rounded-full bg-[#0b63b8] text-[12px] font-bold text-white">?</div>
      </div>
      <div className="mt-[5px] flex h-[31px] shrink-0">
        <div className="flex w-[562px] items-center border border-[#d9d9d9]">
          <span className="ml-[318px] flex-1 pb-px text-[12.300px] tracking-[0.3px] whitespace-nowrap text-black">HANGUODIANJi - 복사본</span>
          <svg width="10" height="7" viewBox="0 0 10 7"><path d="M1 1l4 4 4-4" fill="none" stroke="#555" strokeWidth="1.700" /></svg>
          <div className="ml-[9px] flex h-full w-[31px] items-center justify-center border-l border-[#d9d9d9]">
            <svg width="12" height="13" viewBox="0 0 12 13" fill="none" stroke="#666" strokeWidth="1.400"><path d="M9 4A4.300 4.300 0 1 1 5 2.800M2.500 1.500h3.800v4" /></svg>
          </div>
        </div>
        <div className="ml-3 flex w-[202px] items-center justify-end border border-[#d9d9d9] pr-2">
          <svg width="12" height="12" viewBox="0 0 12 12" fill="none" stroke="#666" strokeWidth="1.500"><circle cx="7.500" cy="4.500" r="3.300" /><path d="M5 7L1 11" strokeWidth="2" /></svg>
        </div>
      </div>
      <div className="mt-[7px] flex h-[28px] shrink-0 items-center text-[#4c607a]">
        <div className="h-full w-[431px]" />
        <div className="flex h-full w-[144px] items-center border-l border-[#e3e3e3] pl-[6px]">修改日期</div>
        <div className="flex h-full w-[120px] items-center border-l border-[#e3e3e3] pl-[6px]">类型</div>
        <div className="flex h-full w-[80px] items-center border-x border-[#e3e3e3] pl-[6px]">大小</div>
      </div>
      <div className="mt-[5px] flex flex-col text-[#6d6d6d]">
        {files.map((f, i) => (
          <div key={f[0]} className={"mr-4 flex h-[21px] items-center " + (i === 6 ? "bg-[#d9d9d9]" : "")}>
            <span className="ml-[438px] w-[144px] tracking-[0.12px]">{f[0]}</span>
            <span className="w-[106px] tracking-[0.25px] whitespace-nowrap">{f[1]}</span>
            <span className="flex-1 pr-[4px] text-right tracking-[0.1px]">{f[2]}</span>
          </div>
        ))}
      </div>
      <div className="mt-auto flex items-center justify-end pr-2">
        <div className="mr-1 flex h-[23px] w-[22px] items-center justify-center border border-[#26a0da] bg-[#cbe8f6]">
          <svg width="16" height="13" viewBox="0 0 16 13" fill="none">
            <path d="M0.500 0.500h4v4h-4zM0.500 4.500h4v4h-4zM0.500 8.500h4v4h-4z" fill="#fff" stroke="#999" />
            <path d="M6 2.500h4M12 2.500h4M6 6.500h4M12 6.500h4M6 10.500h4M12 10.500h4" stroke="#777" />
            <path d="M2 10.500h1" stroke="#d22" />
          </svg>
        </div>
        <svg width="14" height="11" viewBox="0 0 14 11">
          <rect x="0.500" y="0.500" width="13" height="10" fill="#fff" stroke="#999" />
          <path d="M2 2h10v7H2z" fill="#6fb1ea" />
          <path d="M2 5l5 2 5-1v3H2z" fill="#2c6b50" />
        </svg>
      </div>
    </div>
  );
}

/* ---------- taskbar ---------- */

const taskIcons: { name: string; cls: string; icon: React.ReactNode }[] = [
  { name: "edge", cls: "w-[49px]", icon: <Edge size={24} id="ed2" /> },
  {
    name: "files",
    cls: "w-[49px]",
    icon: (
      <svg width="24" height="24" viewBox="0 0 24 24">
        <path d="M1 3h8l2 3h11v14H1z" fill="#e0a012" />
        <path d="M1 6h22v15H1z" fill="#fdd667" />
        <path d="M5 13h14v8h-4v-4H9v4H5z" fill="#3f9ce0" />
      </svg>
    ),
  },
  { name: "chrome", cls: "w-[49px]", icon: <Chrome size={24} /> },
  { name: "ie", cls: "w-[49px]", icon: <InternetExplorer size={24} id="ie2" /> },
  {
    name: "rocket",
    cls: "w-[49px]",
    icon: (
      <svg width="24" height="24" viewBox="0 0 24 24">
        <path d="M9 11q-3 3-3 7v3h3zM15 11q3 3 3 7v3h-3z" fill="#c4cdd4" />
        <path d="M12 1.500Q16 4 16 9v10l-1 2h-2v-6h-2v6H9l-1-2V9q0-5 4-7.500z" fill="#eef2f4" />
        <circle cx="12" cy="8.500" r="2.500" fill="#2a86c5" stroke="#0e2740" />
      </svg>
    ),
  },
];

function Taskbar() {
  return (
    <div className="absolute bottom-0 left-0 flex h-10 w-full items-center bg-[#002b4d] text-white">
      <div className="flex w-12 justify-center">
        <svg width="16" height="16" viewBox="0 0 16 16" fill="#fff">
          <path d="M0 2.300l6.500-.9v6.200H0zM7.300 1.200L16 0v7.600H7.300zM0 8.400h6.500v6.200L0 13.700zM7.300 8.400H16V16l-8.700-1.200z" />
        </svg>
      </div>
      <div className="flex w-12 justify-center">
        <svg width="17" height="17" viewBox="0 0 17 17" fill="none" stroke="#fff" strokeWidth="1.300">
          <circle cx="10.500" cy="6" r="5" /><path d="M7 10l-6 6.500" />
        </svg>
      </div>
      <div className="flex w-[50px] justify-center pr-[2px]">
        <svg width="17" height="16" viewBox="0 0 17 16" fill="none" stroke="#fff" strokeWidth="1.200">
          <path d="M1 0v2.500h10V0M1 5.500h10v5H1zM1 16v-2.500h10V16M15 0v3M15 9v7" /><path d="M13.500 4.500h3v3h-3z" fill="#fff" stroke="none" />
        </svg>
      </div>
      {taskIcons.map((t) => (
        <div key={t.name} className={"relative flex h-10 items-center justify-center " + t.cls}>
          {t.icon}
          {(t.name === "files" || t.name === "rocket") && <div className="absolute bottom-0 h-[2px] w-10 bg-[#99cdf5]" />}
        </div>
      ))}
      <div className="ml-px flex h-10 w-12 items-center justify-center border-b-2 border-[#99cdf5] bg-[#0b4379] pt-[2px] pr-[3px]"><HexLogo size={22} /></div>
      <div className="ml-[5px] flex h-10 w-[40px] items-center justify-center border-b-2 border-[#99cdf5] pt-[2px]"><RustDesk size={24} id="rust2" /></div>
      <div className="ml-auto flex h-full items-center">
        <svg width="24" height="26" viewBox="0 0 24 26">
          <path d="M6 22a6 6 0 0 1 0-11 7 7 0 0 1 13-1 6 6 0 0 1 0 12z" fill="#c4d6f6" />
          <path d="M9 16q-4 5-3 7 3 3 5 0 1-3-2-7zM17 16q-4 5-3 7 3 3 5 0 1-3-2-7z" fill="#2b7af0" />
          <circle cx="17" cy="6" r="5.500" fill="#c42b1c" />
          <text x="15" y="9" fontSize="8" fill="#fff" fontFamily="Open Sans">1</text>
        </svg>
        <span className="ml-[8px] w-[41px] text-[14px] tracking-[0.1px]">27°C</span>
        <span className="w-[57px] text-[14px] tracking-[0.9px]">소나기</span>
        <svg className="ml-px" width="14" height="8" viewBox="0 0 14 8"><path d="M1 7l6-6 6 6" fill="none" stroke="#fff" strokeWidth="1.300" /></svg>
        <svg className="ml-[9px]" width="17" height="14" viewBox="0 0 17 14" fill="none" stroke="#fff" strokeWidth="1.100">
          <path d="M5 1.500h11v8.500H4.500V6M10 10v3M6 13h8M0.500 0.500h4v4h-4zM2.500 5v8" />
        </svg>
        <svg className="ml-[7px]" width="18" height="14" viewBox="0 0 18 14" fill="none" stroke="#fff" strokeWidth="1.100">
          <path d="M1 4.500h2.500L7 1v12L3.500 9.500H1zM9.500 4.500q2 2.500 0 5M12 2.500q3.500 4.500 0 9M14.500 1q4 6 0 12" />
        </svg>
        <span className="ml-[6px] text-[15px] [font-family:'Noto_Sans_CJK_SC',sans-serif]">英</span>
        <span className="ml-[13px] flex size-4 items-center justify-center bg-white text-[14px] leading-4 font-medium text-black [font-family:'Noto_Sans_CJK_SC',sans-serif]">拼</span>
        <div className="ml-[11px] flex w-[71px] flex-col items-center text-[12px] leading-[19px] tracking-[0.1px]">
          <span>10:06</span>
          <span>2025/8/15</span>
        </div>
        <svg className="ml-[13px]" width="17" height="17" viewBox="0 0 17 17" fill="none" stroke="#fff" strokeWidth="1.200">
          <path d="M.8 1h15.400v12H11l-2.500 2.800L6 13H.8z" />
        </svg>
        <div className="ml-[19px] h-10 w-[5px] border-l border-[#5d7a91]" />
      </div>
    </div>
  );
}

export default function App() {
  return (
    <div className="relative h-[1080px] w-[1920px] overflow-hidden bg-[linear-gradient(97deg,#00a2fb_0%,#00adfd_25%,#009bf3_42%,#0077dd_60%,#0457ca_76%,#0340b8_90%,#0336ae_100%)] [font-family:'Open_Sans','Noto_Sans_CJK_KR','Noto_Sans_CJK_SC',sans-serif]">
      <div className="absolute inset-0 bg-[radial-gradient(ellipse_900px_700px_at_200px_750px,rgba(0,184,255,0.75),transparent)]" />
      <div className="absolute inset-0 bg-[linear-gradient(180deg,rgba(0,60,210,0.15),transparent_30%)]" />
      {items.map((it) => (
        <DesktopItem key={it.pos} item={it} />
      ))}
      <ExplorerWindow />
      <VpnWindow />
      <TrafficWindow />
      <Taskbar />
    </div>
  );
}
